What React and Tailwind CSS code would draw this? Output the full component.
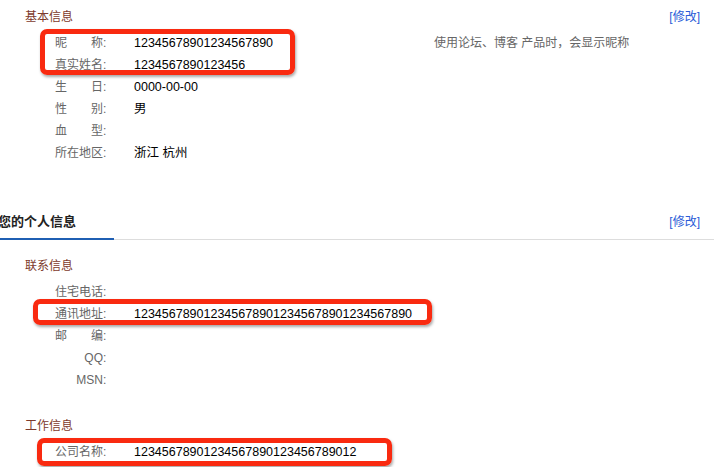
import React from "react";

const Row = ({ label, value, latin, hint }) => (
  <div className="flex h-[22px] items-center pl-[55px] leading-[22px]">
    <span className="w-[79px] shrink-0 text-[12px] text-[#666]">
      <span className={`inline-block w-[48px] ${latin ? "text-right" : "[text-align-last:justify]"}`}>{label}</span>:
    </span>
    <span className="w-[300px] shrink-0 text-[12.5px] text-black">{value}</span>
    {hint && <span className="text-[12px] text-[#666]">{hint}</span>}
  </div>
);

const Mark = ({ className }) => (
  <div
    className={`pointer-events-none absolute rounded-[7px] border-[5px] border-[#f92a10] shadow-[1px_2px_3px_rgba(0,0,0,0.35)] ${className}`}
  />
);

const SubTitle = ({ children, className = "" }) => (
  <div className={`h-[22px] pl-[25px] text-[12px] leading-[22px] text-[#7d3a2c] ${className}`}>{children}</div>
);

export default function App() {
  return (
    <div className="h-[467px] w-[718px] overflow-hidden bg-white font-['Liberation_Sans','Noto_Sans_CJK_SC',sans-serif]">
      <div className="w-[714px] pt-[6px]">
        {/* 基本信息 */}
        <div className="flex justify-between pr-[14px]">
          <SubTitle>基本信息</SubTitle>
          <a className="text-[12px] leading-[22px] text-[#2a5bd7]">[修改]</a>
        </div>
        <div className="mt-[4px]">
          <div className="relative">
            <Mark className="left-[40px] top-[-3px] h-[46px] w-[255px]" />
            <Row label="昵称" value="12345678901234567890" hint="使用论坛、博客 产品时，会显示昵称" />
            <Row label="真实姓名" value="1234567890123456" />
          </div>
          <Row label="生日" value="0000-00-00" />
          <Row label="性别" value="男" />
          <Row label="血型" value="" />
          <Row label="所在地区" value="浙江 杭州" />
        </div>

        {/* 您的个人信息 */}
        <div className="mt-[46px] flex h-[30px] justify-between border-b border-[#ddd]">
          <div className="-mb-px w-[114px] border-b-2 border-[#1f5fb3] pt-[1px] pb-[5px]">
            <span className="-ml-[2px] block text-[13px] font-bold leading-[22px] text-[#222]">您的个人信息</span>
          </div>
          <a className="pt-[1px] pr-[14px] text-[12px] leading-[22px] text-[#2a5bd7]">[修改]</a>
        </div>

        <SubTitle className="mt-[15px]">联系信息</SubTitle>
        <div className="mt-[4px]">
          <Row label="住宅电话" value="" />
          <div className="relative">
            <Mark className="left-[33px] top-[-4px] h-[26px] w-[399px]" />
            <Row label="通讯地址" value="1234567890123456789012345678901234567890" />
          </div>
          <Row label="邮编" value="" />
          <Row label="QQ" value="" latin />
          <Row label="MSN" value="" latin />
        </div>

        <SubTitle className="mt-[24px]">工作信息</SubTitle>
        <div className="mt-[4px]">
          <div className="relative">
            <Mark className="left-[37px] top-[-3px] h-[28px] w-[355px]" />
            <Row label="公司名称" value="12345678901234567890123456789012" />
          </div>
        </div>
      </div>
    </div>
  );
}
